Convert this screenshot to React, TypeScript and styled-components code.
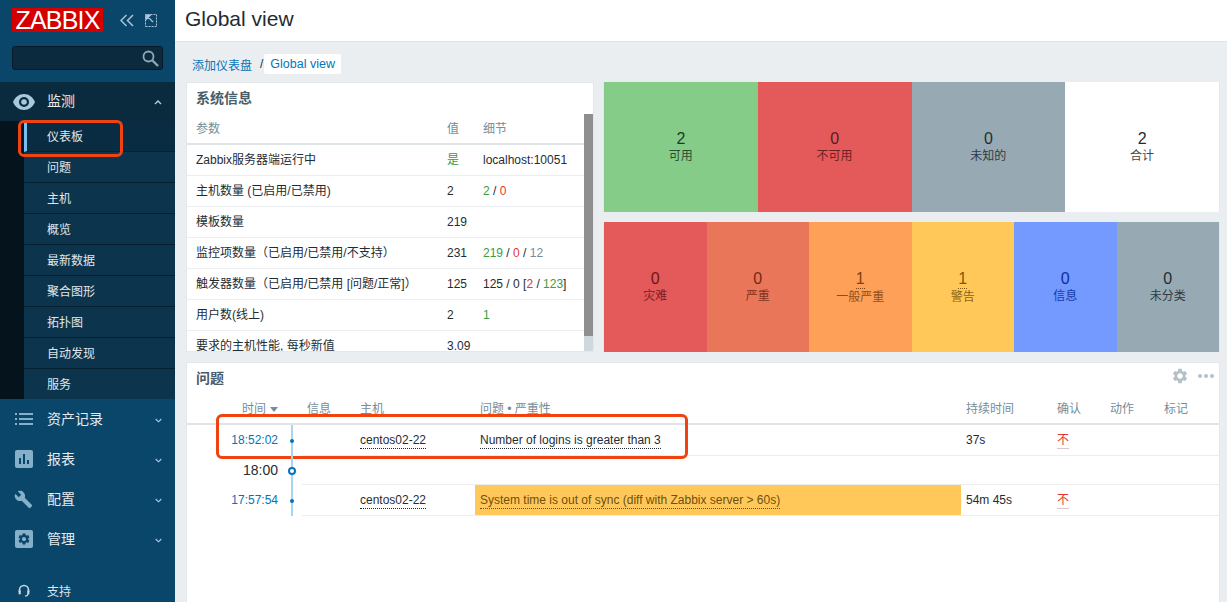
import React from 'react';
import styled, { createGlobalStyle } from 'styled-components';

const Global = createGlobalStyle`
  * { box-sizing: border-box; }
  html, body { margin: 0; height: 100%; overflow: hidden; }
  body { font: 12px "Liberation Sans", "Noto Sans CJK SC", sans-serif; color: #1f2c33; background: #ebeef0; }
`;

const Page = styled.div`display: flex; height: 602px; width: 1227px; overflow: hidden;`;
const Sidebar = styled.aside`width: 175px; flex: none; background: #0a466a; display: flex; flex-direction: column; overflow: hidden; color: #e6ecef; & > * { flex: none; }`;
const Brand = styled.div`display: flex; align-items: center; margin: 8px 0 0 12px; height: 24px;`;
const Logo = styled.div`width: 91px; height: 24px; background: #d40000; color: #fff; font-size: 25px; line-height: 25px; text-align: center; letter-spacing: -0.8px;`;
const BrandIcons = styled.div`display: flex; gap: 11px; margin-left: 17px; color: #a9c5d6;`;
const SearchBox = styled.div`margin: 14px 12px 12px; height: 24px; background: #0b2a3e; border: 1px solid #06192a; border-radius: 3px; display: flex; align-items: center; justify-content: flex-end; padding-right: 3px; color: #8fa8b6;`;
const Section = styled.div`background: #0a2a3d;`;
const SectionHead = styled.div<{ $open?: boolean }>`display: flex; align-items: center; height: ${p => (p.$open ? '39px' : '40px')}; font-size: 14px; background: ${p => (p.$open ? '#0a2a3d' : 'transparent')}; color: #e4ebef;`;
const IconSlot = styled.div`width: 47px; flex: none; display: flex; justify-content: center; color: #86b0ca;`;
const HeadLabel = styled.span`flex: 1; margin-top: -3px;`;
const Chevron = styled.div`width: 34px; display: flex; justify-content: center; color: #b9ccd8; margin-top: 2px;`;
const SubMenu = styled.div`padding-left: 24px; background: #05141c;`;
const SubItem = styled.div<{ $active?: boolean }>`
  position: relative; height: 31px; line-height: 29px; padding-top: 2px; font-size: 12px; background: ${p => (p.$active ? '#0a2c42' : '#0c344d')};
  padding-left: ${p => (p.$active ? '20px' : '23px')}; color: #e0e7eb; border-bottom: 1px solid #06202f;
  border-left: ${p => (p.$active ? '3px solid #74bfef' : 'none')};
  &:last-child { height: 30px; border-bottom: 0; }
`;
const SideMark = styled.div`position: absolute; z-index: 2; left: -9px; top: -1px; width: 105px; height: 37px; border: 3px solid #f0430f; border-radius: 6px;`;
const Support = styled.div`display: flex; align-items: center; height: 30px; margin-top: 16px; font-size: 12px; color: #dfe7ec;`;

const Main = styled.main`flex: 1; min-width: 0; display: flex; flex-direction: column;`;
const TopBar = styled.header`height: 42px; flex: none; background: #fff; border-bottom: 1px solid #dfe4e7; padding-left: 10px; font-size: 21px; line-height: 38px;`;
const Crumbs = styled.nav`display: flex; align-items: center; height: 20px; margin: 12px 0 8px 17px; gap: 8px;`;
const CrumbLink = styled.span`color: #0275b8;`;
const CrumbSlash = styled.span`margin-right: -7px;`;
const CrumbTab = styled.span`background: #fff; color: #0275b8; height: 20px; line-height: 20px; padding: 0 6px; border-radius: 2px; font-size: 12.5px;`;
const Board = styled.div`display: grid; grid-template-columns: 408px 617px; grid-template-rows: 270px 240px; gap: 10px 9px; margin-left: 11px;`;

const Panel = styled.section`background: #fff; border: 1px solid #e4e8ea; overflow: hidden; min-height: 0;`;
const WideCell = styled(Panel)`grid-column: 1 / 3; position: relative; overflow: visible; border-bottom: 0;`;
const PanelTitle = styled.h2`margin: 0; height: 31px; line-height: 30px; padding-left: 9px; font-size: 14px; font-weight: 700; color: #4a5c67;`;
const InfoBody = styled.div`display: flex; height: 238px;`;
const InfoTable = styled.div`flex: 1; min-width: 0; overflow: hidden;`;
const InfoRow = styled.div`display: grid; grid-template-columns: 251px 36px 1fr; height: 31px; line-height: 31px; padding-left: 9px; border-bottom: 1px solid #ebeef0; white-space: nowrap;`;
const InfoHead = styled(InfoRow)`color: #768d99; border-bottom: 2px solid #dfe4e7; line-height: 30px;`;
const Scrollbar = styled.div`width: 9px; flex: none; background: #cfd8dc;`;
const ScrollThumb = styled.div`height: 222px; background: #8f8f8f;`;
const Tone = styled.span<{ $c: string }>`color: ${p => p.$c};`;

const Stack = styled.div`display: flex; flex-direction: column; gap: 10px;`;
const StatusRow = styled.div`display: flex; height: 130px; border: solid #e4e8ea; border-width: 0 1px;`;
const StatusCell = styled.div<{ $bg: string; $fg: string }>`
  flex: 1; display: flex; flex-direction: column; align-items: center; justify-content: center;
  background: ${p => p.$bg}; color: ${p => p.$fg}; padding-bottom: 1px;
`;
const Count = styled.span<{ $dotted?: boolean }>`font-size: 16px; line-height: 19px; ${p => (p.$dotted ? 'border-bottom: 1px dotted currentColor;' : '')}`;
const CountLabel = styled.span`font-size: 12px; line-height: 16px; opacity: .88;`;

const ProblemTools = styled.div`position: absolute; right: 5px; top: 4px; display: flex; align-items: center; gap: 9px; color: #b4c1c8;`;
const Row = styled.div`display: grid; grid-template-columns: 97px 18px 53px 120px 486px 91px 53px 54px 1fr; position: relative;`;
const HeadRow = styled(Row)`height: 31px; color: #768d99; border-bottom: 2px solid #dfe4e7; line-height: 30px;`;
const HeadCell = styled.div`padding-left: 5px; white-space: nowrap;`;
const TimeHead = styled(HeadCell)`text-align: right; padding-right: 6px;`;
const SortArrow = styled.span`display: inline-block; margin-left: 4px; width: 0; height: 0; border: 4px solid transparent; border-top: 5px solid #768d99; border-bottom: 0; vertical-align: 1px;`;
const TimeCell = styled.div<{ $big?: boolean }>`text-align: right; padding-right: 6px; line-height: ${p => (p.$big ? '29px' : '30px')}; color: ${p => (p.$big ? '#1f2c33' : '#0275b8')}; font-size: ${p => (p.$big ? '14px' : '12px')};`;
const Line = styled.div`position: relative; &::before { content: ''; position: absolute; left: 7px; top: 0; bottom: 0; width: 2px; background: #a9d4ee; }`;
const Dot = styled.span`position: absolute; left: 6px; top: 50%; margin-top: -2px; width: 4px; height: 4px; border-radius: 50%; background: #0275b8;`;
const Ring = styled.span`position: absolute; left: 4px; top: 50%; margin-top: -4px; width: 8px; height: 8px; border-radius: 50%; background: #fff; border: 2px solid #0275b8;`;
const Cell = styled.div<{ $bg?: string; $c?: string }>`
  height: 100%; padding-left: 5px; line-height: 30px; border-bottom: 1px solid #ebeef0; white-space: nowrap;
  background: ${p => p.$bg || 'transparent'}; color: ${p => p.$c || 'inherit'};
`;
const Dotted = styled.span<{ $c?: string }>`border-bottom: 1px dotted ${p => p.$c || '#1f2c33'}; padding-bottom: 1px;`;
const NoAck = styled.span`color: #e33734; border-bottom: 1px solid #d9c8c8; padding-bottom: 1px;`;
const DataRow = styled(Row)<{ $h: number }>`height: ${p => p.$h}px;`;
const RowMark = styled.div`position: absolute; left: 29px; top: -11px; width: 472px; height: 45px; border: 3px solid #f0430f; border-radius: 6px; pointer-events: none;`;

const Sub = ['问题', '主机', '概览', '最新数据', '聚合图形', '拓扑图', '自动发现', '服务'];
const Down = () => <svg width="7" height="5" viewBox="0 0 7 5"><path d="M.7 1l2.8 2.8L6.3 1" fill="none" stroke="currentColor" strokeWidth="1.1" /></svg>;
const Up = () => <svg width="8" height="5" viewBox="0 0 8 5"><path d="M1 4l3-3 3 3" fill="none" stroke="currentColor" strokeWidth="1.4" /></svg>;
const gearPath = 'M19.14 12.94c.04-.3.06-.61.06-.94 0-.32-.02-.64-.07-.94l2.03-1.58c.18-.14.23-.41.12-.61l-1.92-3.32c-.12-.22-.37-.29-.59-.22l-2.39.96c-.5-.38-1.03-.7-1.62-.94l-.36-2.54c-.04-.24-.24-.41-.48-.41h-3.84c-.24 0-.43.17-.47.41l-.36 2.54c-.59.24-1.13.57-1.62.94l-2.39-.96c-.22-.08-.47 0-.59.22L2.74 8.87c-.12.21-.08.47.12.61l2.03 1.58c-.05.3-.09.63-.09.94s.02.64.07.94l-2.03 1.58c-.18.14-.23.41-.12.61l1.92 3.32c.12.22.37.29.59.22l2.39-.96c.5.38 1.03.7 1.62.94l.36 2.54c.05.24.24.41.48.41h3.84c.24 0 .44-.17.47-.41l.36-2.54c.59-.24 1.13-.56 1.62-.94l2.39.96c.22.08.47 0 .59-.22l1.92-3.32c.12-.22.07-.47-.12-.61l-2.01-1.58zM12 15.6c-1.98 0-3.6-1.62-3.6-3.6s1.62-3.6 3.6-3.6 3.6 1.62 3.6 3.6-1.62 3.6-3.6 3.6z';

const Eye = () => (
  <svg width="22" height="16" viewBox="0 0 22 16" fill="#a8c8dc">
    <path fillRule="evenodd" d="M11 0C6 0 2 3.2 0 8c2 4.8 6 8 11 8s9-3.2 11-8c-2-4.8-6-8-11-8zm0 3a5 5 0 110 10 5 5 0 010-10zm0 2.2a2.8 2.8 0 100 5.6 2.8 2.8 0 000-5.6z" />
  </svg>
);
const ListIcon = () => (
  <svg width="18" height="12" viewBox="0 0 18 12" fill="#86b0ca">
    <rect x="0" y="0" width="2" height="2" /><rect x="0" y="5" width="2" height="2" /><rect x="0" y="10" width="2" height="2" />
    <rect x="4" y="0" width="14" height="2" /><rect x="4" y="5" width="14" height="2" /><rect x="4" y="10" width="14" height="2" />
  </svg>
);
const ChartIcon = () => (
  <svg width="18" height="18" viewBox="0 0 18 18">
    <rect width="18" height="18" rx="2" fill="#86b0ca" />
    <rect x="4" y="8" width="2" height="6" fill="#0a466a" /><rect x="8" y="4" width="2" height="10" fill="#0a466a" /><rect x="12" y="10" width="2" height="4" fill="#0a466a" />
  </svg>
);
const WrenchIcon = () => (
  <svg width="19" height="19" viewBox="0 0 24 24" fill="#86b0ca">
    <path d="M22.7 19l-9.1-9.1c.9-2.3.4-5-1.5-6.9-2-2-5-2.4-7.4-1.3L9 6 6 9 1.6 4.7C.4 7.1.9 10.1 2.9 12.1c1.9 1.9 4.6 2.4 6.9 1.5l9.1 9.1c.4.4 1 .4 1.4 0l2.3-2.3c.5-.4.5-1.1.1-1.4z" />
  </svg>
);
const GearBox = () => (
  <svg width="18" height="18" viewBox="0 0 18 18">
    <rect width="18" height="18" rx="2" fill="#86b0ca" />
    <g transform="translate(2 2) scale(.583)"><path d={gearPath} fill="#0a466a" /></g>
  </svg>
);
const Headset = () => (
  <svg width="12" height="13" viewBox="0 0 12 13" fill="none" stroke="#c9d8e1" strokeWidth="1.6">
    <path d="M1.5 8V6a4.5 4.5 0 019 0v2" /><rect x=".6" y="6.5" width="2.2" height="3.8" fill="#c9d8e1" stroke="none" /><rect x="9.2" y="6.5" width="2.2" height="3.8" fill="#c9d8e1" stroke="none" /><path d="M10 10c0 1.4-1.2 2-3 2" strokeWidth="1.1" />
  </svg>
);

const Head = ({ icon, label }: { icon: React.ReactNode; label: string }) => (
  <SectionHead>
    <IconSlot>{icon}</IconSlot>
    <HeadLabel>{label}</HeadLabel>
    <Chevron><Down /></Chevron>
  </SectionHead>
);

const info: [string, React.ReactNode, React.ReactNode][] = [
  ['Zabbix服务器端运行中', <Tone $c="#3a9c3f">是</Tone>, 'localhost:10051'],
  ['主机数量 (已启用/已禁用)', '2', <><Tone $c="#3a9c3f">2</Tone> / <Tone $c="#e33734">0</Tone></>],
  ['模板数量', '219', ''],
  ['监控项数量（已启用/已禁用/不支持）', '231', <><Tone $c="#3a9c3f">219</Tone> / <Tone $c="#e33734">0</Tone> / <Tone $c="#768d99">12</Tone></>],
  ['触发器数量（已启用/已禁用 [问题/正常]）', '125', <>125 / 0 [<Tone $c="#e33734">2</Tone> / <Tone $c="#3a9c3f">123</Tone>]</>],
  ['用户数(线上)', '2', <Tone $c="#3a9c3f">1</Tone>],
  ['要求的主机性能, 每秒新值', '3.09', ''],
];

const hostStatus = [
  { n: 2, l: '可用', bg: '#86cc89', fg: '#1f3a2a' },
  { n: 0, l: '不可用', bg: '#e45959', fg: '#5c1a1f' },
  { n: 0, l: '未知的', bg: '#97aab3', fg: '#1f2c33' },
  { n: 2, l: '合计', bg: '#ffffff', fg: '#1f2c33' },
];
const severities = [
  { n: 0, l: '灾难', bg: '#e45959', fg: '#6e1418' },
  { n: 0, l: '严重', bg: '#e97659', fg: '#732a16' },
  { n: 1, l: '一般严重', bg: '#ffa059', fg: '#7f4312', d: true },
  { n: 1, l: '警告', bg: '#ffc859', fg: '#80590a', d: true },
  { n: 0, l: '信息', bg: '#7499ff', fg: '#0a2f9c' },
  { n: 0, l: '未分类', bg: '#97aab3', fg: '#1f2c33' },
];

export default function App() {
  return (
    <Page>
      <Global />
      <Sidebar>
        <Brand>
          <Logo>ZABBIX</Logo>
          <BrandIcons>
            <svg width="14" height="13" viewBox="0 0 14 13" fill="none" stroke="currentColor" strokeWidth="1.5"><path d="M6.5 1L1 6.5 6.5 12M13 1L7.5 6.5 13 12" /></svg>
            <svg width="12" height="13" viewBox="0 0 12 13" fill="none" stroke="currentColor"><path d="M.5 12.5h11v-12h-11z" strokeDasharray="2 1" /><path d="M1 1h4.5L1 5.5zM2 2l6 6" fill="currentColor" strokeWidth="1.2" /></svg>
          </BrandIcons>
        </Brand>
        <SearchBox>
          <svg width="17" height="17" viewBox="0 0 17 17" fill="none" stroke="currentColor" strokeWidth="1.8"><circle cx="6.5" cy="6.5" r="5" /><path d="M10.5 10.5l5.5 5.5" strokeWidth="2.4" /></svg>
        </SearchBox>
        <Section>
          <SectionHead $open>
            <IconSlot><Eye /></IconSlot>
            <HeadLabel>监测</HeadLabel>
            <Chevron><Up /></Chevron>
          </SectionHead>
          <SubMenu>
            <SubItem $active>仪表板<SideMark /></SubItem>
            {Sub.map(s => <SubItem key={s}>{s}</SubItem>)}
          </SubMenu>
        </Section>
        <Head icon={<ListIcon />} label="资产记录" />
        <Head icon={<ChartIcon />} label="报表" />
        <Head icon={<WrenchIcon />} label="配置" />
        <Head icon={<GearBox />} label="管理" />
        <Support>
          <IconSlot><Headset /></IconSlot>
          <span>支持</span>
        </Support>
      </Sidebar>
      <Main>
        <TopBar>Global view</TopBar>
        <Crumbs>
          <CrumbLink>添加仪表盘</CrumbLink>
          <CrumbSlash>/</CrumbSlash>
          <CrumbTab>Global view</CrumbTab>
        </Crumbs>
        <Board>
          <Panel>
            <PanelTitle>系统信息</PanelTitle>
            <InfoBody>
              <InfoTable>
                <InfoHead><span>参数</span><span>值</span><span>细节</span></InfoHead>
                {info.map(([a, b, c]) => (
                  <InfoRow key={a}><span>{a}</span><span>{b}</span><span>{c}</span></InfoRow>
                ))}
              </InfoTable>
              <Scrollbar><ScrollThumb /></Scrollbar>
            </InfoBody>
          </Panel>
          <Stack>
            <StatusRow>
              {hostStatus.map(s => (
                <StatusCell key={s.l} $bg={s.bg} $fg={s.fg}><Count>{s.n}</Count><CountLabel>{s.l}</CountLabel></StatusCell>
              ))}
            </StatusRow>
            <StatusRow>
              {severities.map(s => (
                <StatusCell key={s.l} $bg={s.bg} $fg={s.fg}><Count $dotted={s.d}>{s.n}</Count><CountLabel>{s.l}</CountLabel></StatusCell>
              ))}
            </StatusRow>
          </Stack>
          <WideCell>
            <PanelTitle>问题</PanelTitle>
            <ProblemTools>
              <svg width="18" height="18" viewBox="0 0 24 24" fill="currentColor"><path d={gearPath} /></svg>
              <svg width="16" height="4" viewBox="0 0 16 4" fill="currentColor"><circle cx="2" cy="2" r="2" /><circle cx="8" cy="2" r="2" /><circle cx="14" cy="2" r="2" /></svg>
            </ProblemTools>
            <HeadRow>
              <TimeHead>时间<SortArrow /></TimeHead>
              <div />
              <HeadCell>信息</HeadCell>
              <HeadCell>主机</HeadCell>
              <HeadCell>问题 • 严重性</HeadCell>
              <HeadCell>持续时间</HeadCell>
              <HeadCell>确认</HeadCell>
              <HeadCell>动作</HeadCell>
              <HeadCell>标记</HeadCell>
            </HeadRow>
            <DataRow $h={31}>
              <TimeCell>18:52:02</TimeCell>
              <Line><Dot /></Line>
              <Cell />
              <Cell><Dotted>centos02-22</Dotted></Cell>
              <Cell><Dotted>Number of logins is greater than 3</Dotted></Cell>
              <Cell>37s</Cell>
              <Cell><NoAck>不</NoAck></Cell>
              <Cell />
              <Cell />
              <RowMark />
            </DataRow>
            <DataRow $h={29}>
              <TimeCell $big>18:00</TimeCell>
              <Line><Ring /></Line>
              <Cell /><Cell /><Cell /><Cell /><Cell /><Cell /><Cell />
            </DataRow>
            <DataRow $h={31}>
              <TimeCell>17:57:54</TimeCell>
              <Line><Dot /></Line>
              <Cell />
              <Cell><Dotted>centos02-22</Dotted></Cell>
              <Cell $bg="#ffc859" $c="#6e500f"><Dotted $c="#6e500f">System time is out of sync (diff with Zabbix server &gt; 60s)</Dotted></Cell>
              <Cell>54m 45s</Cell>
              <Cell><NoAck>不</NoAck></Cell>
              <Cell />
              <Cell />
            </DataRow>
          </WideCell>
        </Board>
      </Main>
    </Page>
  );
}
